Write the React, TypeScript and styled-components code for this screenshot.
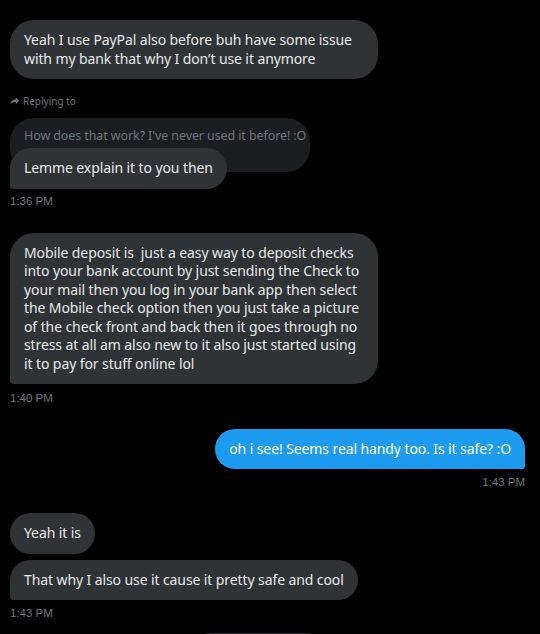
import styled, { createGlobalStyle } from "styled-components"

const Global = createGlobalStyle`
  html, body {
    margin: 0;
    padding: 0;
    background: #000;
  }
  body {
    font-family: "Noto Sans", "Open Sans", sans-serif;
    overflow: hidden;
  }
`

const Thread = styled.div`
  width: 540px;
  height: 634px;
  overflow: hidden;
  display: flex;
  flex-direction: column;
  align-items: flex-start;
  padding: 20px 15px 0 10px;
  box-sizing: border-box;
  background: #000;
`

const Bubble = styled.div<{ $sent?: boolean; $tail?: boolean; $width?: number; $top?: number }>`
  box-sizing: border-box;
  width: ${(p) => (p.$width ? `${p.$width}px` : "fit-content")};
  margin-top: ${(p) => p.$top ?? 0}px;
  align-self: ${(p) => (p.$sent ? "flex-end" : "flex-start")};
  padding: 11px 14px;
  font-size: 14px;
  letter-spacing: -0.1px;
  line-height: 18.5px;
  color: ${(p) => (p.$sent ? "#fff" : "#e7e9ea")};
  background: ${(p) => (p.$sent ? "#1d9bf0" : "#2f3336")};
  border-radius: ${(p) =>
    p.$sent
      ? p.$tail
        ? "24px 24px 4px 24px"
        : "24px"
      : p.$tail
      ? "24px 24px 24px 4px"
      : "24px"};
  position: relative;
  z-index: 1;
`

const Line = styled.span`
  display: block;
  white-space: pre;
`

const Stamp = styled.div<{ $right?: boolean; $top: number }>`
  align-self: ${(p) => (p.$right ? "flex-end" : "flex-start")};
  margin-top: ${(p) => p.$top}px;
  font-family: "Liberation Sans", Arial, sans-serif;
  font-size: 11.5px;
  line-height: 16px;
  color: #71767b;
`

const ReplyLabel = styled.div`
  display: flex;
  align-items: center;
  gap: 3px;
  margin-top: 15px;
  font-size: 10px;
  line-height: 14px;
  color: #71767b;
`

const Quote = styled.div`
  box-sizing: border-box;
  width: 300px;
  margin-top: 10px;
  padding: 9px 14px 28px;
  font-size: 12.5px;
  letter-spacing: -0.1px;
  line-height: 17px;
  color: #6e767d;
  background: #1c1d20;
  border-radius: 24px;
  white-space: nowrap;
`

const Peek = styled.div`
  width: 135px;
  height: 40px;
  margin: 12px 0 0 180px;
  background: #2f3336;
  border-radius: 24px;
  flex-shrink: 0;
`

const ReplyArrow = () => (
  <svg width="10" height="10" viewBox="0 0 24 24" fill="#71767b">
    <path d="M14 4l8 7.5-8 7.5v-4.5c-6 0-10 1.8-13 6 1-6 4-11.5 13-12.5V4z" />
  </svg>
)

const bigText = [
  "Mobile deposit is  just a easy way to deposit checks",
  "into your bank account by just sending the Check to",
  "your mail then you log in your bank app then select",
  "the Mobile check option then you just take a picture",
  "of the check front and back then it goes through no",
  "stress at all am also new to it also just started using",
  "it to pay for stuff online lol",
]

export default function App() {
  return (
    <>
      <Global />
      <Thread>
        <Bubble $width={368}>
          <Line>Yeah I use PayPal also before buh have some issue</Line>
          <Line>with my bank that why I don’t use it anymore</Line>
        </Bubble>

        <ReplyLabel>
          <ReplyArrow />
          Replying to
        </ReplyLabel>
        <Quote>How does that work? I've never used it before! :O</Quote>
        <Bubble $tail $top={-24}>
          <Line>Lemme explain it to you then</Line>
        </Bubble>
        <Stamp $top={4}>1:36 PM</Stamp>

        <Bubble $tail $width={368} $top={24}>
          {bigText.map((l) => (
            <Line key={l}>{l}</Line>
          ))}
        </Bubble>
        <Stamp $top={5.5}>1:40 PM</Stamp>

        <Bubble $sent $tail $top={23}>
          <Line>oh i see! Seems real handy too. Is it safe? :O</Line>
        </Bubble>
        <Stamp $right $top={5}>1:43 PM</Stamp>

        <Bubble $top={23}>
          <Line>Yeah it is</Line>
        </Bubble>
        <Bubble $tail $top={6}>
          <Line>That why I also use it cause it pretty safe and cool</Line>
        </Bubble>
        <Stamp $top={5}>1:43 PM</Stamp>

        <Peek />
      </Thread>
    </>
  )
}
